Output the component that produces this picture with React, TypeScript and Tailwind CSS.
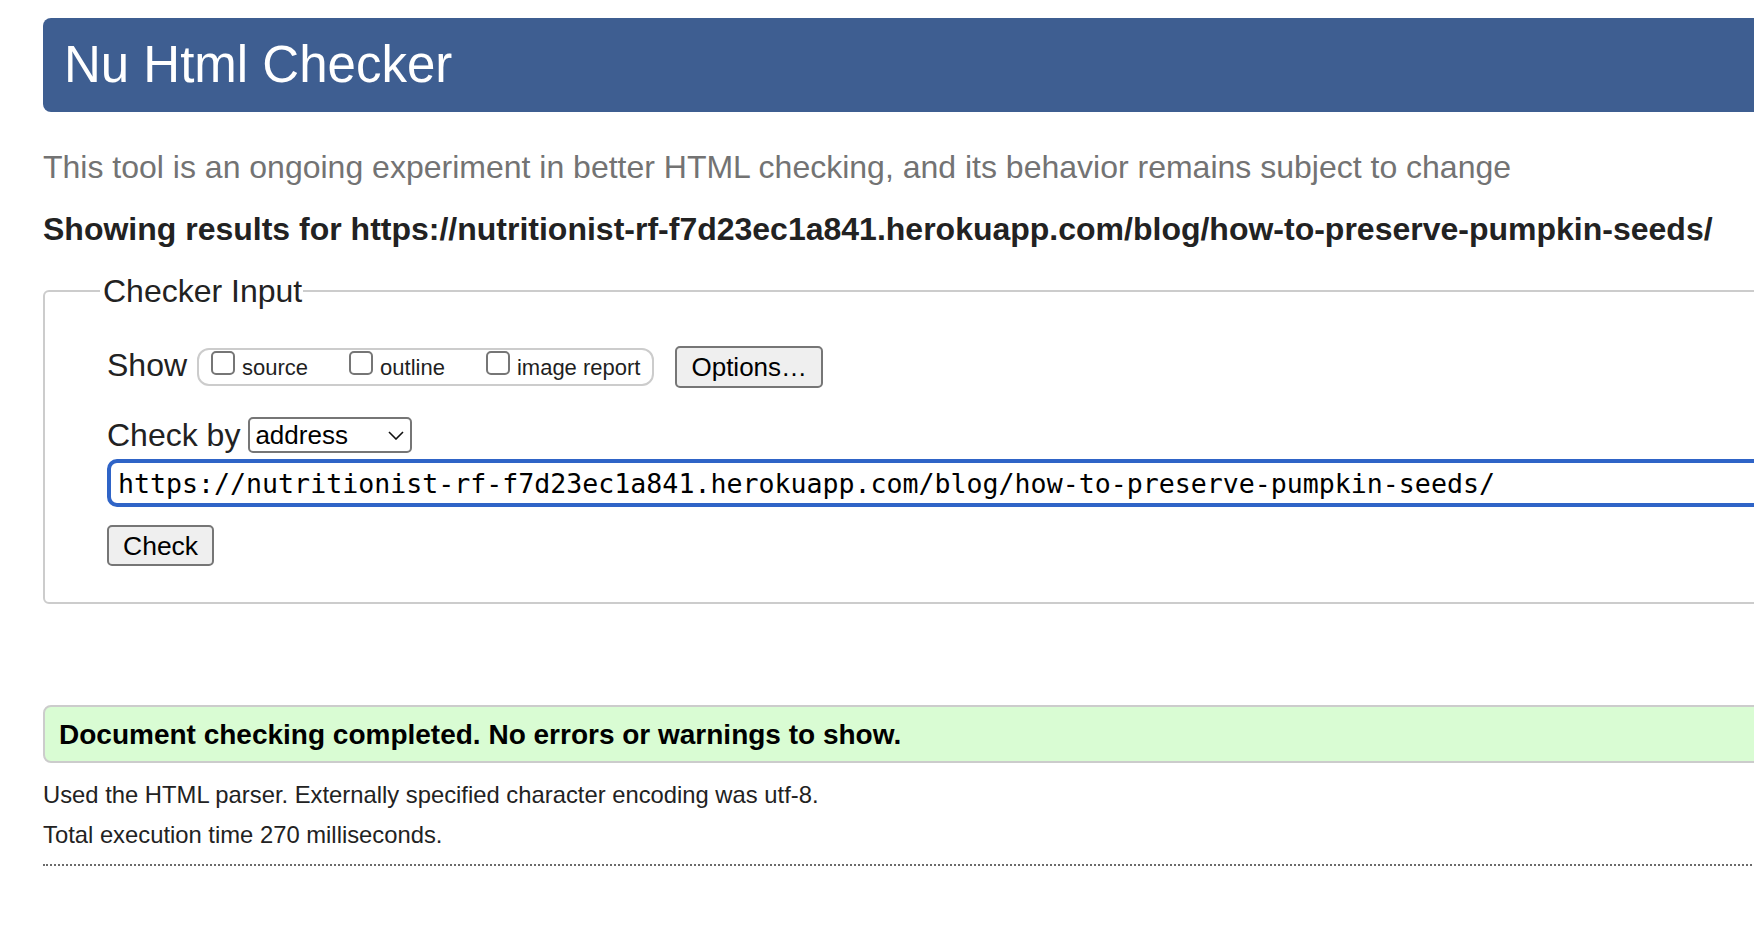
const sans = "font-['Liberation_Sans',Arial,sans-serif]";
const mono = "font-['DejaVu_Sans_Mono',monospace]";

const URL = 'https://nutritionist-rf-f7d23ec1a841.herokuapp.com/blog/how-to-preserve-pumpkin-seeds/';

function ShowOption({ label }: { label: string }) {
	return (
		<label className="flex cursor-pointer items-end gap-[7px]">
			<input
				type="checkbox"
				className="m-0 h-[24px] w-[24px] appearance-none rounded-[5px] border-2 border-[#767676] bg-white"
			/>
			<span className="text-[22px] leading-[14px] text-[#1f1f1f]">{label}</span>
		</label>
	);
}

export default function App() {
	return (
		<div className={`${sans} min-h-screen overflow-hidden bg-white pl-[43px] text-[#222]`}>
			{/* Header */}
			<header className="mt-[18px] h-[94px] w-[1760px] rounded-[8px] bg-[#3e5e91] pl-[21px]">
				<h1 className="text-[51px] leading-[94px] font-normal text-white">Nu Html Checker</h1>
			</header>

			<p className="mt-[35px] text-[32px] leading-[40px] text-[#737373]">
				This tool is an ongoing experiment in better HTML checking, and its behavior remains subject to change
			</p>
			<p className="mt-[22px] text-[32px] leading-[40px] font-bold whitespace-nowrap text-[#222]">
				Showing results for {URL}
			</p>

			{/* Checker Input */}
			<fieldset className="mt-[22px] w-[1760px] rounded-[6px] border-2 border-[#cccccc] pt-[35px] pb-[36px] pl-[55px]">
				<legend className="pr-[1px] pl-[3px] text-[32px] leading-[40px] text-[#222]">Checker Input</legend>
				<div className="pl-[7px]">
					{/* Show row */}
					<div className="flex h-[42px] items-center">
						<span className="mb-[4px] text-[32px] leading-[40px]">Show</span>
						<div className="ml-[10px] flex h-[38px] items-end gap-[41px] rounded-[12px] border-2 border-[#cccccc] px-[12px] pb-[9px]">
							<ShowOption label="source" />
							<ShowOption label="outline" />
							<ShowOption label="image report" />
						</div>
						<button className="ml-[21px] h-[42px] rounded-[5px] border-2 border-[#767676] bg-[#efefef] px-[14px] text-[26px] leading-[30px] text-black">
							Options…
						</button>
					</div>

					{/* Check by row */}
					<div className="mt-[29px] flex h-[36px] items-center gap-[8px]">
						<label htmlFor="docselect" className="text-[32px] leading-[40px]">
							Check by
						</label>
						<div className="relative">
							<select
								id="docselect"
								className="h-[36px] w-[164px] appearance-none rounded-[5px] border-2 border-[#767676] bg-white pl-[5px] text-[26px] leading-[30px] text-black"
							>
								<option value="">address</option>
								<option value="file">file upload</option>
								<option value="text">text input</option>
							</select>
							<svg
								className="pointer-events-none absolute top-[14px] right-[8px]"
								width="16"
								height="9"
								viewBox="0 0 16 9"
								fill="none"
							>
								<path d="M1 1 L8 8 L15 1" stroke="#111" strokeWidth="1.6" />
							</svg>
						</div>
					</div>

					{/* URL input */}
					<input
						type="url"
						readOnly
						value={URL}
						className={`${mono} mt-[6px] block h-[48px] w-[1700px] rounded-[10px] border-4 border-[#2f64c7] bg-white pl-[7px] text-[26.6px] text-black outline-none`}
					/>

					<button className="mt-[18px] block h-[41px] rounded-[5px] border-2 border-[#767676] bg-[#efefef] px-[14px] text-[26.5px] leading-[30px] text-black">
						Check
					</button>
				</div>
			</fieldset>

			{/* Result */}
			<div className="mt-[101px] flex h-[58px] w-[1760px] items-center rounded-l-[8px] border-2 border-[#cccccc] bg-[#d9fcd3] pl-[14px]">
				<p className="mt-[2px] text-[28px] leading-[34px] font-bold text-black">
					Document checking completed. No errors or warnings to show.
				</p>
			</div>

			<p className="mt-[17px] text-[23.8px] leading-[30px] text-[#222]">
				Used the HTML parser. Externally specified character encoding was utf-8.
			</p>
			<p className="mt-[10px] text-[23.8px] leading-[30px] text-[#222]">Total execution time 270 milliseconds.</p>

			<div className="mt-[14px] w-[1760px] border-t-2 border-dotted border-[#6b6b6b]" />
		</div>
	);
}
